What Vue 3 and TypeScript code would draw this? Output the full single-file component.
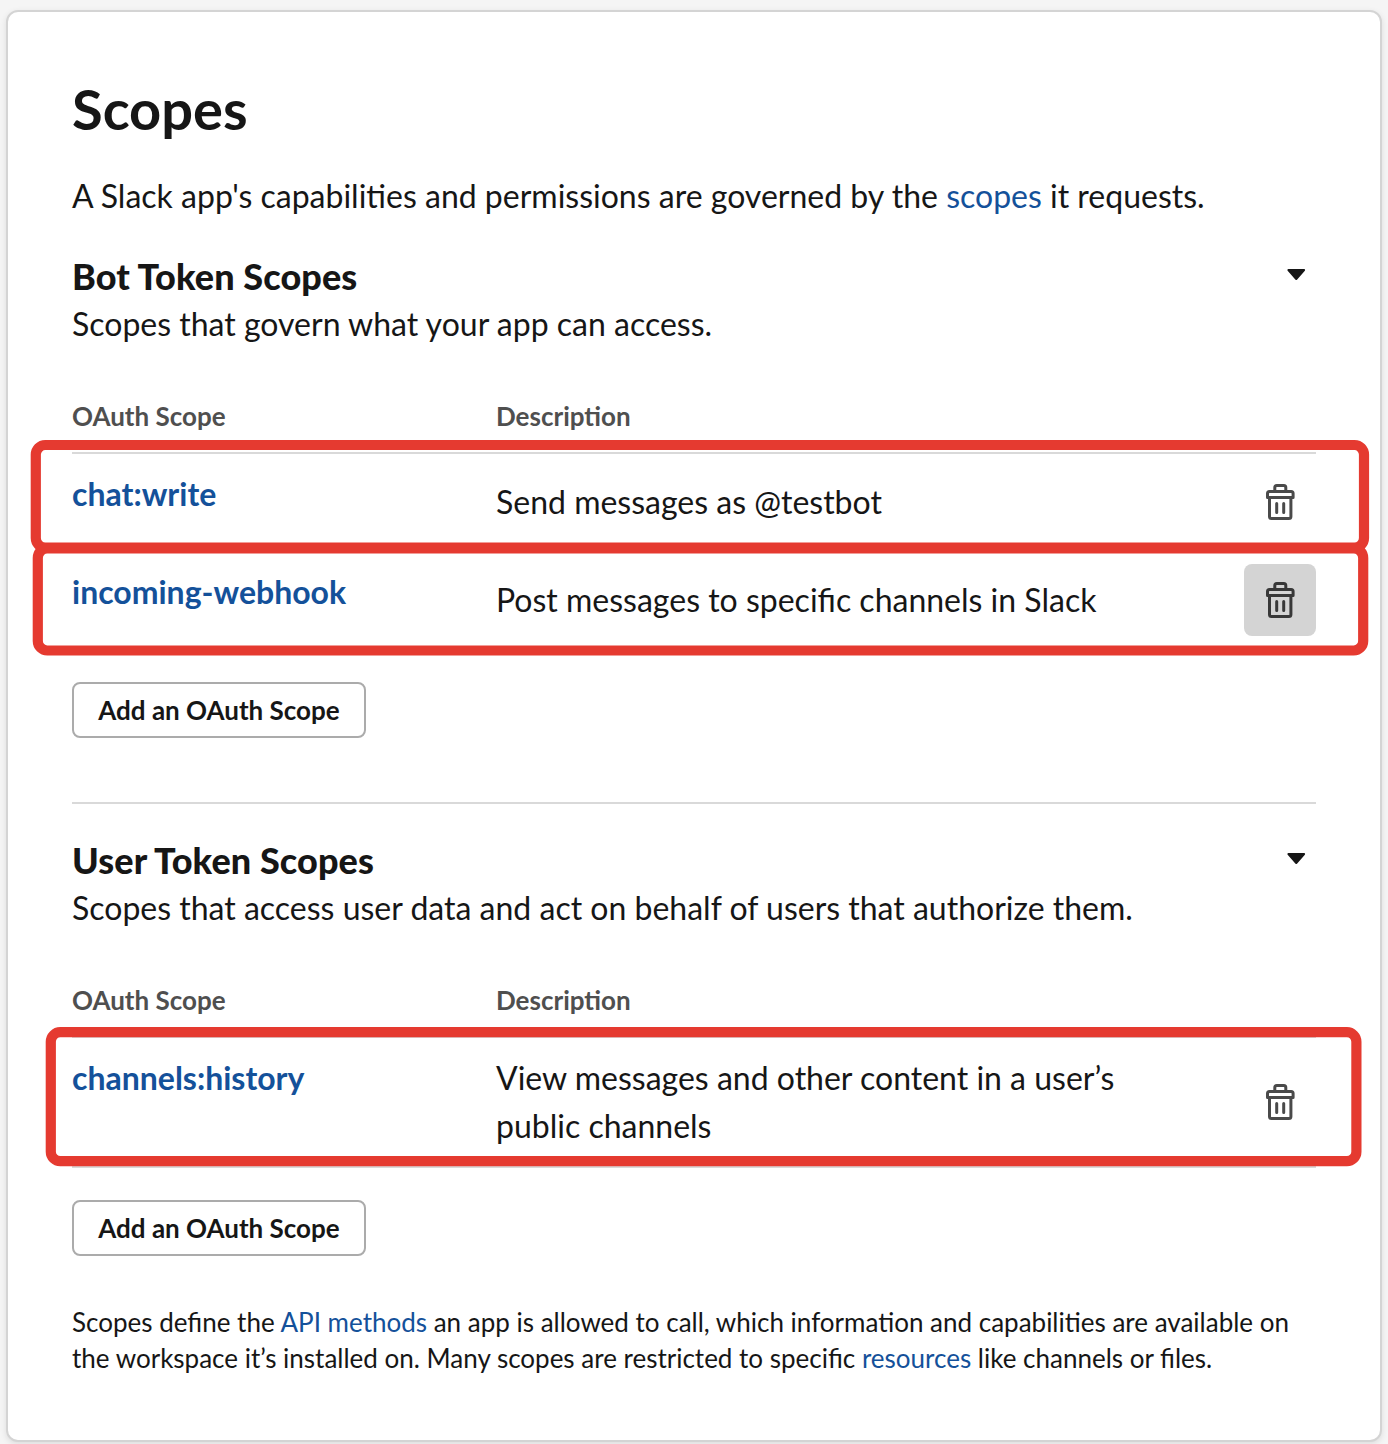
<script setup lang="ts">
interface Scope {
  name: string
  description: string
  active?: boolean
}

interface ScopeGroup {
  title: string
  summary: string
  scopes: Scope[]
}

interface Highlight {
  x: number
  y: number
  width: number
  height: number
}

const groups: ScopeGroup[] = [
  {
    title: 'Bot Token Scopes',
    summary: 'Scopes that govern what your app can access.',
    scopes: [
      { name: 'chat:write', description: 'Send messages as @testbot' },
      {
        name: 'incoming-webhook',
        description: 'Post messages to specific channels in Slack',
        active: true,
      },
    ],
  },
  {
    title: 'User Token Scopes',
    summary: 'Scopes that access user data and act on behalf of users that authorize them.',
    scopes: [
      {
        name: 'channels:history',
        description: 'View messages and other content in a user’s public channels',
      },
    ],
  },
]

// Centre lines of the annotation frames, in page coordinates.
const highlights: Highlight[] = [
  { x: 35.8, y: 445, width: 1328.2, height: 102.6 },
  { x: 37.8, y: 548.4, width: 1325.4, height: 102.1 },
  { x: 50.8, y: 1032.2, width: 1305.6, height: 129 },
]
</script>

<template>
  <main class="page">
    <section class="card">
      <h1 class="title">Scopes</h1>
      <p class="intro">
        A Slack app's capabilities and permissions are governed by the
        <a class="link">scopes</a> it requests.
      </p>

      <section v-for="group in groups" :key="group.title" class="group">
        <header class="group-head">
          <h2 class="group-title">{{ group.title }}</h2>
          <svg class="caret" width="20" height="13" viewBox="0 0 20 13">
            <path d="M2.4 2H18.1L10.25 11Z" />
          </svg>
        </header>
        <p class="summary">{{ group.summary }}</p>

        <div class="table">
          <div class="head-row">
            <span class="col-name">OAuth Scope</span>
            <span>Description</span>
          </div>
          <div v-for="scope in group.scopes" :key="scope.name" class="row">
            <a class="col-name scope-link">{{ scope.name }}</a>
            <p class="description">{{ scope.description }}</p>
            <button class="trash" :class="{ active: scope.active }" aria-label="Remove scope">
              <svg width="72" height="72" viewBox="0 0 72 72">
                <path d="M30.8 25V21.5a2 2 0 0 1 2-2h7a2 2 0 0 1 2 2V25" />
                <path d="M23.5 31.5V27.5a2 2 0 0 1 2-2h21.6a2 2 0 0 1 2 2v4z" />
                <path d="M25.5 32V50.5a2 2 0 0 0 2 2H44.9a2 2 0 0 0 2-2V32" />
                <path d="M32.7 37.5v9M39.7 37.5v9" stroke-linecap="round" />
              </svg>
            </button>
          </div>
        </div>

        <button class="add">Add an OAuth Scope</button>
      </section>

      <p class="footnote">
        Scopes define the <a class="link">API methods</a> an app is allowed to call, which
        information and capabilities are available on the workspace it’s installed on. Many scopes
        are restricted to specific <a class="link">resources</a> like channels or files.
      </p>
    </section>

    <svg class="annotations" width="1388" height="1444" viewBox="0 0 1388 1444">
      <rect
        v-for="(box, i) in highlights"
        :key="i"
        :x="box.x"
        :y="box.y"
        :width="box.width"
        :height="box.height"
        rx="9.5"
      />
    </svg>
  </main>
</template>

<style>
body {
  margin: 0;
  background: #f5f5f5;
}
</style>

<style scoped>
.page {
  position: relative;
  box-sizing: border-box;
  width: 1388px;
  height: 1444px;
  padding: 10px 6px 2px;
  overflow: hidden;
  background: #f5f5f5;
  color: #161616;
  font-family: Lato, sans-serif;
  font-size: 32px;
  line-height: 48px;
}

.card {
  box-sizing: border-box;
  height: 1432px;
  padding: 64px;
  border: 2px solid #d4d4d4;
  border-radius: 12px;
  background: #fff;
  box-shadow: 0 2px 6px rgba(0, 0, 0, 0.1);
}

h1,
h2,
p {
  margin: 0;
}

.title {
  margin-bottom: 30px;
  font-size: 56px;
  font-weight: 700;
  line-height: 66px;
}

.link {
  color: #14519a;
}

.group {
  padding-top: 32px;
}

.group + .group {
  margin-top: 64px;
  border-top: 2px solid #d9d9d9;
}

.group-head {
  display: flex;
  justify-content: space-between;
}

.group-title {
  font-size: 36px;
  font-weight: 900;
  letter-spacing: 0.1px;
  line-height: 48px;
}

.caret {
  margin: 16px 10px 0 0;
  fill: #161616;
  stroke: #161616;
  stroke-width: 2;
  stroke-linejoin: round;
}

.table {
  margin-top: 50px;
}

.head-row {
  display: flex;
  padding-bottom: 18px;
  border-bottom: 2px solid #d9d9d9;
  color: #4f4f4f;
  font-size: 26px;
  font-weight: 700;
  line-height: 36px;
}

.col-name {
  flex: none;
  width: 424px;
}

.row {
  display: flex;
  align-items: center;
  min-height: 96px;
  border-bottom: 2px solid #d9d9d9;
}

.scope-link {
  align-self: flex-start;
  padding-top: 16px;
  color: #14519a;
  font-weight: 700;
}

.description {
  width: 660px;
  padding: 16px 0;
}

.trash {
  width: 72px;
  height: 72px;
  margin-left: auto;
  padding: 0;
  border: 0;
  border-radius: 8px;
  background: none;
}

.trash svg {
  display: block;
  fill: none;
  stroke: #4a4a4a;
  stroke-width: 3;
  stroke-linejoin: round;
}

.trash.active {
  background: #d4d4d4;
}

.trash.active svg {
  stroke: #383838;
}

.add {
  display: block;
  box-sizing: border-box;
  width: 294px;
  height: 56px;
  margin-top: 32px;
  padding: 0;
  border: 2px solid #ababab;
  border-radius: 8px;
  background: #fff;
  color: #161616;
  font-family: inherit;
  font-size: 26px;
  font-weight: 700;
  line-height: 36px;
}

.footnote {
  margin-top: 48px;
  font-size: 26px;
  line-height: 36px;
}

.annotations {
  position: absolute;
  top: 0;
  left: 0;
  fill: none;
  stroke: #e53a30;
  stroke-width: 10.2;
  pointer-events: none;
}
</style>
